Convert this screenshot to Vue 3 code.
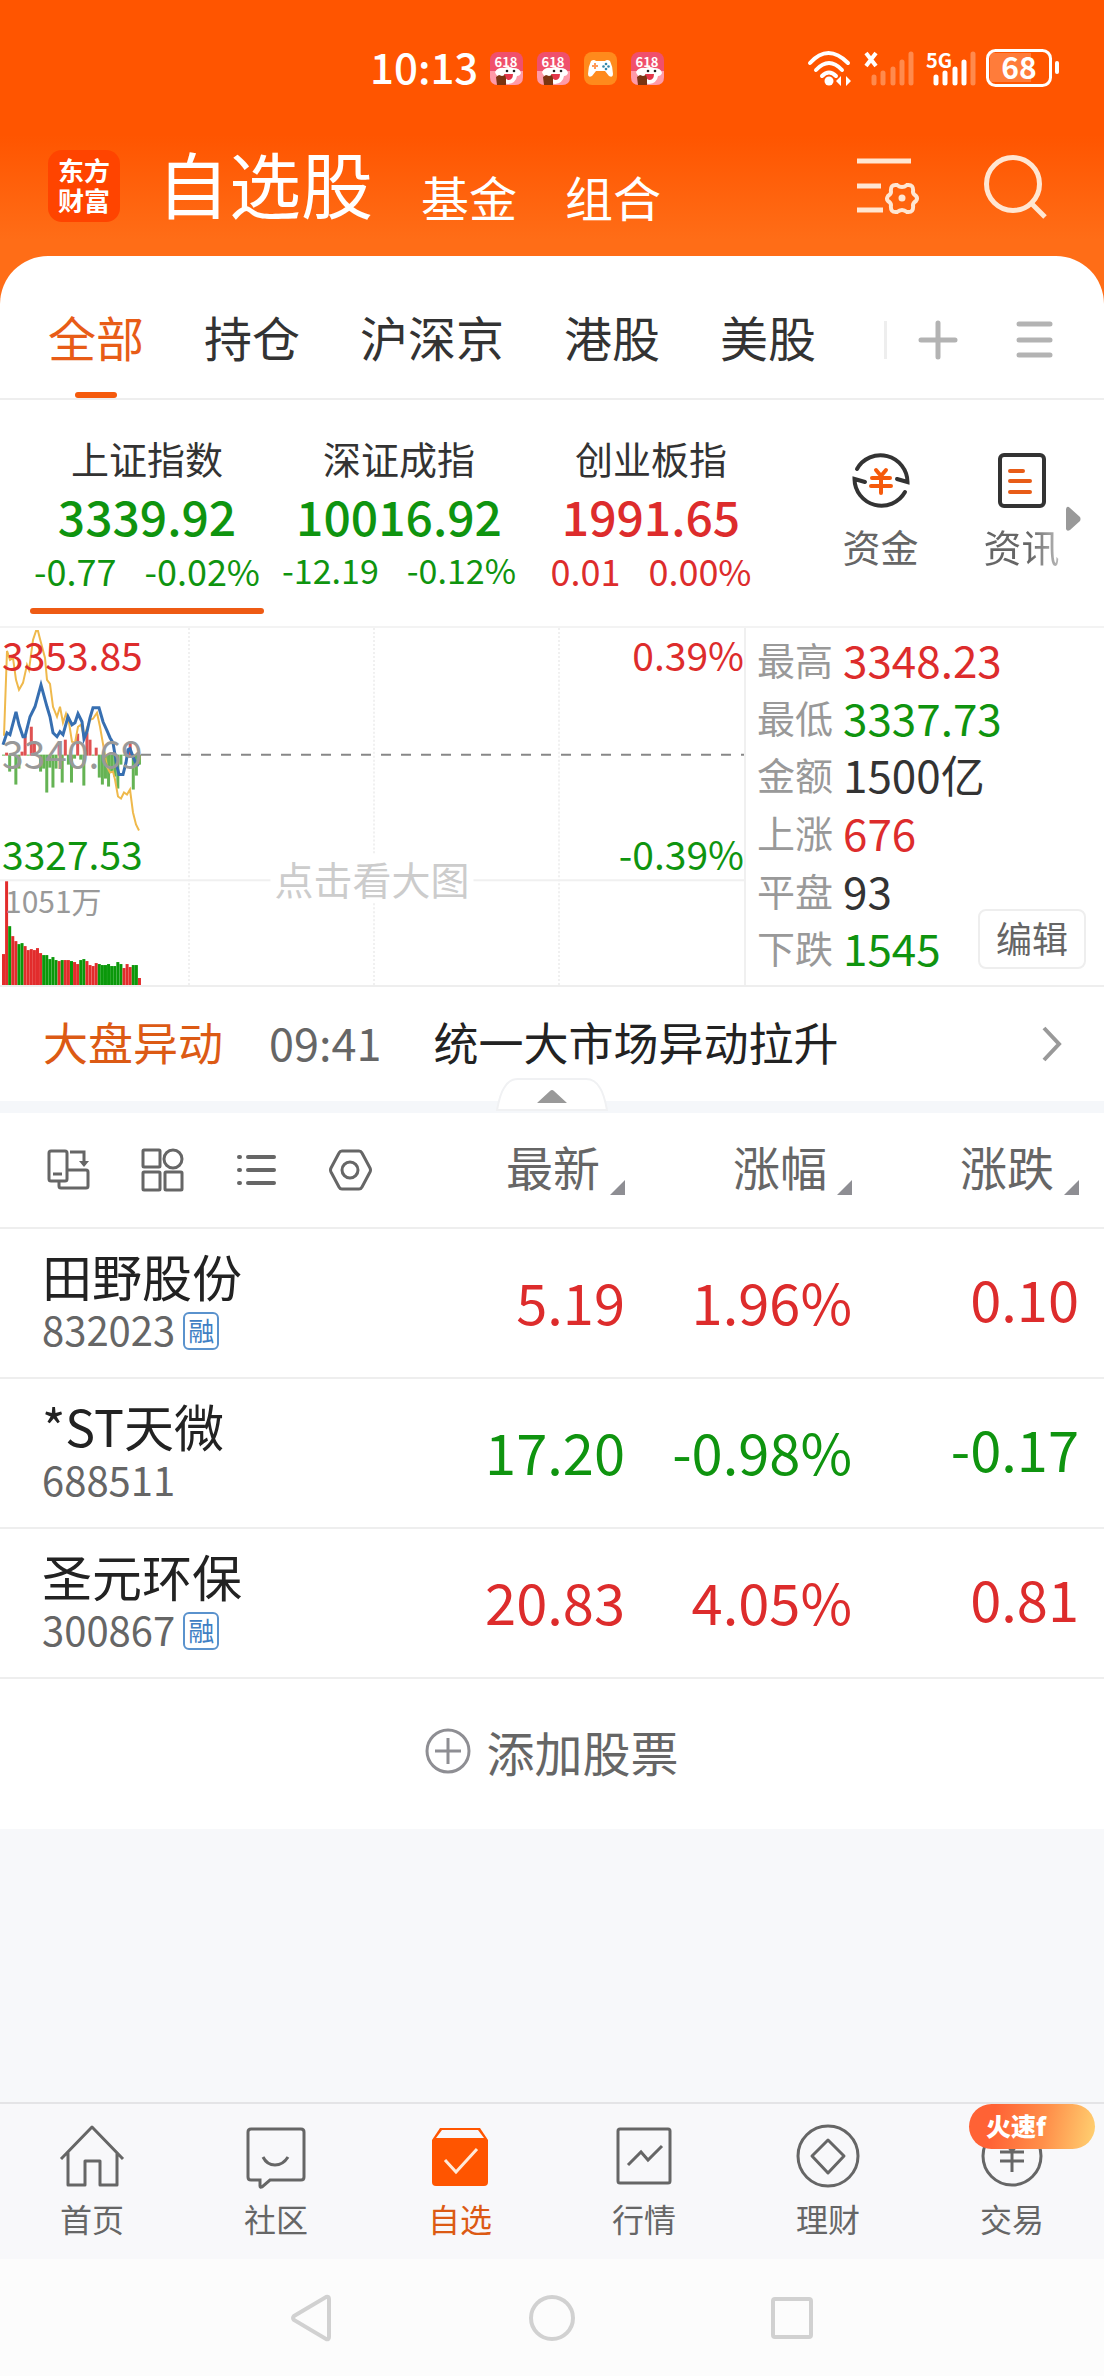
<script setup>
import { ref } from 'vue'

const sections = ['自选股', '基金', '组合']
const groups = ['全部', '持仓', '沪深京', '港股', '美股']
const activeGroup = ref('全部')

const indices = [
  { name: '上证指数', value: '3339.92', diff: '-0.77', pct: '-0.02%', trend: 'down' },
  { name: '深证成指', value: '10016.92', diff: '-12.19', pct: '-0.12%', trend: 'down', compact: true },
  { name: '创业板指', value: '1991.65', diff: '0.01', pct: '0.00%', trend: 'up' }
]
const activeIndex = ref('上证指数')

const facts = [
  { label: '最高', value: '3348.23', tone: 'up' },
  { label: '最低', value: '3337.73', tone: 'down' },
  { label: '金额', value: '1500亿', tone: 'flat' },
  { label: '上涨', value: '676', tone: 'up' },
  { label: '平盘', value: '93', tone: 'flat' },
  { label: '下跌', value: '1545', tone: 'down' }
]

const columns = ['最新', '涨幅', '涨跌']
const stocks = [
  { name: '田野股份', code: '832023', margin: true, last: '5.19', pct: '1.96%', diff: '0.10', trend: 'up' },
  { name: '*ST天微', code: '688511', margin: false, last: '17.20', pct: '-0.98%', diff: '-0.17', trend: 'down' },
  { name: '圣元环保', code: '300867', margin: true, last: '20.83', pct: '4.05%', diff: '0.81', trend: 'up' }
]

// Intraday series, in plot units: one slot per minute
const slot = 3.09
const volumes = [
  [31, 1], [104, 1], [59, 0], [49, 1], [44, 1], [41, 0], [42, 0], [39, 1], [35, 1], [36, 1], [35, 1], [37, 1],
  [32, 1], [30, 0], [30, 0], [26, 0], [28, 0], [25, 0], [24, 1], [25, 0], [25, 1], [25, 1], [24, 0], [23, 1],
  [21, 1], [25, 0], [26, 0], [24, 1], [20, 1], [19, 1], [22, 1], [21, 0], [20, 0], [20, 0], [21, 0], [19, 0],
  [19, 0], [23, 0], [21, 0], [17, 1], [21, 1], [18, 1], [20, 0], [20, 0], [7, 1]
]
const momentum = [
  0, 2, -16, 0, -29, -13, 3, 19, 0, 28, 12, 0, -16, -13, -37, -12, -32, -13, 11, -27, 15, -9, -27, -3, 21,
  -4, -30, 22, 15, 0, 7, -22, -29, -23, -31, -16, -21, -33, -9, 0, 0, 12, -34, -20, -9
]
const price = '3,117 7,105 10,107 16,84 19,97 23,109 25,109 30,89 35,79 41,57 47,79 50,89 53,105 57,109 60,104 63,107 68,89 72,97 75,95 78,86 82,94 84,111 87,104 90,90 93,80 99,80 103,94 107,103 110,110 113,115 117,139 119,147 123,147 126,135 128,122 130,121 133,129 136,136 139,138'
const leading = '4,108 7,23 10,32 13,30 16,52 19,62 23,55 27,37 29,42 33,12 36,3 38,3 40,11 45,30 47,52 50,56 53,79 57,89 60,79 63,95 66,86 69,95 72,114 75,115 78,99 81,97 84,109 90,92 93,91 97,85 100,99 104,122 107,139 110,145 113,144 115,152 118,169 121,171 124,165 127,167 130,162 133,185 136,197 139,203'

const tabs = ['首页', '社区', '自选', '行情', '理财', '交易']
</script>

<template>
  <div class="screen">
    <div class="status">
      <span class="clock">10:13</span>
      <svg v-for="n in [1, 2, 3, 4]" :key="n" width="33" height="33" viewBox="0 0 33 33" aria-hidden="true">
        <template v-if="n === 3">
          <rect width="33" height="33" rx="8" fill="#ff8a1c" />
          <path d="M7 9q3-2 5 0h9q2-2 5 0 3 6 3 13 0 4-4 2l-4-5h-9l-4 5q-4 2-4-2 0-7 3-13z" fill="#fff" />
          <path d="M8 14h6M11 11v6" stroke="#ff9a5a" stroke-width="2" />
          <circle cx="22" cy="12" r="1.3" fill="#38a" /><circle cx="22" cy="17" r="1.3" fill="#38a" />
          <circle cx="19.500" cy="14.500" r="1.300" fill="#38a" /><circle cx="24.500" cy="14.500" r="1.300" fill="#38a" />
        </template>
        <template v-else>
          <rect width="33" height="33" rx="8" fill="#f0506c" />
          <path d="M0 19h33v6q0 8-8 8H8q-8 0-8-8z" fill="#ff9aa8" />
          <text x="16" y="15" class="promo" text-anchor="middle">618</text>
          <path d="M5 20q3-5 9-4 5-2 9 0 7 0 8 5-1 3-4 3-1 7-9 8-8-1-8-7-4-1-5-5z" fill="#fff" />
          <path d="M14 22h9q0 6-5 6-3-1-4-6z" fill="#e4364a" />
          <circle cx="17" cy="19" r="1.300" fill="#222" /><circle cx="24" cy="19" r="1.300" fill="#222" />
          <path d="M6 25l3-2 3 1 3-1 1 3v7H7z" fill="#7a3512" />
        </template>
      </svg>
      <svg class="system" width="256" height="40" viewBox="0 0 256 40" fill="none" aria-label="68%">
        <g stroke="#fff" stroke-width="4" stroke-linecap="round">
          <path d="M4 15q18-20 38 0" /><path d="M10 22q13-14 26 0" /><path d="M16 28q7-7 14 0" />
        </g>
        <circle cx="23" cy="33" r="4.500" fill="#fff" />
        <path d="M30 33l5-5v10zM45 33l-5-5v10z" fill="#fff" />
        <path d="M60 5l10 13M70 5L60 18" stroke="#fff" stroke-width="4" />
        <g stroke="#ff8a4d" stroke-width="5" stroke-linecap="round">
          <path d="M68 29v6M77 25v10M87 21v14M96 14v21M105 6v29M167 6v29" />
        </g>
        <path d="M130 29v6M139 25v10M149 21v14M158 14v21" stroke="#fff" stroke-width="5" stroke-linecap="round" />
        <text x="120" y="20" class="net">5G</text>
        <path d="M184 5h41v29h-41z" fill="#ff7c3a" />
        <rect x="181.500" y="2.500" width="63" height="35" rx="8" stroke="#fff" stroke-width="3" />
        <path d="M251 15v9" stroke="#fff" stroke-width="4" stroke-linecap="round" />
        <text x="213" y="31" class="charge" text-anchor="middle">68</text>
      </svg>
    </div>

    <header class="top">
      <div class="logo"><span>东方</span><span>财富</span></div>
      <nav class="sections">
        <a v-for="(s, i) in sections" :key="s" href="#" :class="{ current: i === 0 }">{{ s }}</a>
      </nav>
      <button class="tool" aria-label="列表设置">
        <svg width="64" height="60" viewBox="0 0 64 60" fill="none" stroke="#ffe6d2" stroke-width="5">
          <path d="M1 5h54M1 30h24M1 54h26" />
          <path d="M41 29q5 4 10 0 7-1 6 7 0 2 3 4 2 2 0 5-3 2-3 4 1 8-6 7-5-4-10 0-7 1-6-7 0-2-3-4-2-2 0-5 3-2 3-4-1-8 6-7z" stroke-width="4" />
          <circle cx="46" cy="42" r="3.500" fill="#ffe6d2" stroke="none" />
        </svg>
      </button>
      <button class="tool search" aria-label="搜索">
        <svg width="64" height="66" viewBox="0 0 64 66" fill="none" stroke="#ffe6d2" stroke-width="5">
          <circle cx="29" cy="31" r="26.500" /><path d="M47 50l14 14" />
        </svg>
      </button>
    </header>

    <main class="sheet">
      <nav class="groups">
        <button v-for="g in groups" :key="g" :class="{ current: g === activeGroup }" @click="activeGroup = g">{{ g }}</button>
        <div class="group-tools">
          <button aria-label="新增分组">
            <svg width="40" height="40" viewBox="0 0 40 40" stroke="#b3b3b3" stroke-width="5" stroke-linecap="round"><path d="M20 3v34M3 20h34" /></svg>
          </button>
          <button aria-label="分组管理">
            <svg width="40" height="40" viewBox="0 0 40 40" stroke="#b3b3b3" stroke-width="5" stroke-linecap="round"><path d="M5 4h31M5 20h31M5 35h31" /></svg>
          </button>
        </div>
      </nav>

      <section class="indices">
        <button v-for="x in indices" :key="x.name" class="index" :class="{ current: x.name === activeIndex }" @click="activeIndex = x.name">
          <span class="index-name">{{ x.name }}</span>
          <strong :class="x.trend">{{ x.value }}</strong>
          <span class="change" :class="[x.trend, { compact: x.compact }]"><span>{{ x.diff }}</span><span>{{ x.pct }}</span></span>
        </button>
        <div class="shortcuts">
          <a href="#">
            <svg width="60" height="60" viewBox="0 0 60 60" fill="none" stroke="#333" stroke-width="4">
              <path d="M6 19A27 27 0 0 1 56.500 32L46 29" stroke-linecap="round" />
              <path d="M54 42A27 27 0 0 1 3.500 29L14 32" stroke-linecap="round" />
              <path d="M25 20l5 6 5-6M21 28h18M20 36h20M30 27v16" stroke="#f55a0c" stroke-linecap="round" />
            </svg>
            <span>资金</span>
          </a>
          <a href="#">
            <svg width="60" height="60" viewBox="0 0 60 60" fill="none" stroke="#333" stroke-width="4">
              <rect x="8" y="5" width="44" height="51" rx="4" />
              <path d="M18 21h13M18 31h20M18 42h20" stroke="#e85c17" stroke-linecap="round" />
            </svg>
            <span class="faded">资讯</span>
          </a>
          <svg class="more" width="16" height="26" viewBox="0 0 16 26"><path d="M1 3q1-4 4-1l10 9q1 2 0 4L5 24q-3 2-4-1z" fill="#999" /></svg>
        </div>
      </section>

      <section class="market">
        <div class="plot">
          <svg viewBox="0 0 744 358" preserveAspectRatio="none" aria-label="分时走势">
            <g stroke="#f0f0f0" stroke-width="2">
              <path d="M189 0v358M374 0v358M559 0v358" stroke-dasharray="2 2" />
              <path d="M0 253h744" />
            </g>
            <path d="M141 127h603" stroke="#888" stroke-width="2" stroke-dasharray="10 10" />
            <rect v-for="(m, i) in momentum" :key="'m' + i" :x="2 + i * slot" :y="m > 0 ? 127 - m : 127" width="3" :height="Math.abs(m) + 1" :fill="m > 0 ? '#df5252' : '#65b354'" />
            <rect v-for="(v, i) in volumes" :key="'v' + i" :x="2 + i * slot" :y="358 - v[0]" width="3" :height="v[0]" :fill="v[1] ? '#e22c2c' : '#0a980a'" />
            <polyline :points="leading" fill="none" stroke="#efb94c" stroke-width="2" />
            <polyline :points="price" fill="none" stroke="#376fb1" stroke-width="3" />
          </svg>
          <span class="tag high up">3353.85</span>
          <span class="tag high right up">0.39%</span>
          <span class="tag base">3340.69</span>
          <span class="tag low down">3327.53</span>
          <span class="tag low right down">-0.39%</span>
          <span class="tag hint">点击看大图</span>
          <span class="tag volume">1051万</span>
        </div>
        <div class="side">
          <dl>
            <div v-for="f in facts" :key="f.label"><dt>{{ f.label }}</dt><dd :class="f.tone">{{ f.value }}</dd></div>
          </dl>
          <button class="edit">编辑</button>
        </div>
      </section>

      <a href="#" class="news">
        <span class="news-kind">大盘异动</span>
        <time>09:41</time>
        <span class="news-title">统一大市场异动拉升</span>
        <svg width="20" height="36" viewBox="0 0 20 36" fill="none" stroke="#999" stroke-width="4"><path d="M2 2l15 16L2 34" /></svg>
      </a>
      <div class="divider">
        <button class="fold" aria-label="收起">
          <svg width="112" height="34" viewBox="0 0 112 34">
            <path d="M1 32Q4 16 8 10 13 1 22 1h68q9 0 14 9 4 6 7 22z" fill="#fff" stroke="#f0f1f3" stroke-width="2" />
            <path d="M41 25l13-12q2-2 4 0l13 12z" fill="#999" />
          </svg>
        </button>
      </div>

      <table class="stocks">
        <colgroup><col><col class="c-last"><col class="c-pct"><col class="c-diff"></colgroup>
        <thead>
          <tr>
            <th>
              <div class="views">
                <button aria-label="横屏">
                  <svg width="44" height="44" viewBox="0 0 44 44" fill="none" stroke="#666" stroke-width="3">
                    <rect x="3" y="3" width="18" height="30" rx="2" /><path d="M7 26h9M24 4h14v13M13 33v5q0 2 2 2h25q2 0 2-2V24q0-2-2-2H21" /><path d="M33 13h10l-5 6z" fill="#666" stroke="none" />
                  </svg>
                </button>
                <button aria-label="宫格">
                  <svg width="44" height="44" viewBox="0 0 44 44" fill="none" stroke="#666" stroke-width="3">
                    <rect x="3" y="2" width="17" height="17" rx="1" /><circle cx="33" cy="11" r="9" /><rect x="3" y="24" width="17" height="18" rx="1" /><rect x="25" y="24" width="17" height="18" rx="1" />
                  </svg>
                </button>
                <button aria-label="列表">
                  <svg width="44" height="44" viewBox="0 0 44 44" fill="none" stroke="#666" stroke-width="4" stroke-linecap="round">
                    <path d="M5 9h1M5 22h1M5 35h1M14 9h26M14 22h26M14 35h26" />
                  </svg>
                </button>
                <button aria-label="设置">
                  <svg width="44" height="44" viewBox="0 0 44 44" fill="none" stroke="#666" stroke-width="3" stroke-linejoin="round">
                    <path d="M14 3h17q2 0 3 2l8 15q1 2 0 4l-8 15q-1 2-3 2H14q-2 0-3-2L3 24q-1-2 0-4l8-15q1-2 3-2z" /><circle cx="22" cy="22" r="8" />
                  </svg>
                </button>
              </div>
            </th>
            <th v-for="c in columns" :key="c">
              <button class="sort">{{ c }}<svg width="15" height="15" viewBox="0 0 15 15"><path d="M15 0v15H0z" fill="#8e8e93" /></svg></button>
            </th>
          </tr>
        </thead>
        <tbody>
          <tr v-for="s in stocks" :key="s.code" :class="s.trend">
            <th scope="row">
              <span class="name">{{ s.name }}</span>
              <span class="code">{{ s.code }}<i v-if="s.margin">融</i></span>
            </th>
            <td>{{ s.last }}</td>
            <td>{{ s.pct }}</td>
            <td>{{ s.diff }}</td>
          </tr>
        </tbody>
      </table>

      <button class="add">
        <svg width="46" height="46" viewBox="0 0 46 46" fill="none" stroke="#8e8e93" stroke-width="3"><circle cx="23" cy="23" r="21" /><path d="M23 10v26M10 23h26" /></svg>
        添加股票
      </button>
    </main>

    <nav class="tabbar">
      <a v-for="t in tabs" :key="t" href="#" :class="{ current: t === '自选' }">
        <svg width="68" height="68" viewBox="0 0 68 68" fill="none" stroke="#666" stroke-width="3">
          <template v-if="t === '首页'">
            <path d="M3 37L34 5l31 32M10 30v33h17V39h15v24h17V30" stroke-linejoin="round" />
          </template>
          <template v-else-if="t === '社区'">
            <path d="M9 7h50q3 0 3 3v45q0 3-3 3H28l-8 7q-2 1-2-1v-6H9q-3 0-3-3V10q0-3 3-3z" />
            <path d="M21 35q4 8 12 8t13-8" stroke-width="3" />
          </template>
          <template v-else-if="t === '自选'">
            <path d="M6 18L14 6h40l8 12v42q0 4-4 4H10q-4 0-4-4z" fill="#f50" stroke="none" />
            <path d="M16 8h36l6 8H10z" fill="#f8f8fa" stroke="none" />
            <path d="M19 38l11 12 21-23" stroke="#ffe9d8" />
          </template>
          <template v-else-if="t === '行情'">
            <rect x="8" y="7" width="52" height="54" rx="2" /><path d="M18 43l13-13 7 8 14-14" />
          </template>
          <template v-else-if="t === '理财'">
            <circle cx="34" cy="34" r="30" /><path d="M34 18l16 16-16 17-16-17z" stroke-linejoin="round" />
          </template>
          <template v-else>
            <circle cx="34" cy="34" r="29" /><path d="M27 21l7 8 7-8M22 30h24M22 39h24M34 29v21" />
          </template>
        </svg>
        <span>{{ t }}</span>
        <em v-if="t === '交易'">火速f</em>
      </a>
    </nav>

    <footer class="system-keys">
      <button aria-label="返回"><svg width="48" height="52" viewBox="0 0 48 52"><path d="M6 24L38 5q3-1 3 2v38q0 3-3 2L6 28q-2-2 0-4z" /></svg></button>
      <button aria-label="主屏幕"><svg width="48" height="52" viewBox="0 0 48 52"><circle cx="24" cy="26" r="21" /></svg></button>
      <button aria-label="最近任务"><svg width="48" height="52" viewBox="0 0 48 52"><rect x="5" y="7" width="38" height="38" rx="2" /></svg></button>
    </footer>
  </div>
</template>

<style>
body { margin: 0; }
</style>

<style scoped>
.screen {
  display: flex;
  flex-direction: column;
  min-height: 100vh;
  font-family: "Noto Sans CJK SC", sans-serif;
  color: #333;
  background: linear-gradient(#f50 0, #f50 135px, #ff6d17 240px, #ff6d17 320px, #f7f8fa 320px);
}
button {
  padding: 0;
  border: 0;
  background: none;
  font: inherit;
  color: inherit;
}
a { color: inherit; text-decoration: none; }
svg { display: block; flex: none; }
.up { color: #dd2c2c; }
.down { color: #0f940f; }
.flat { color: #333; }

.status {
  display: flex;
  align-items: center;
  gap: 14px;
  height: 136px;
  padding: 0 42px 0 370px;
  color: #fff;
}
.clock { font-size: 42px; line-height: 60px; font-weight: 500; margin-right: -2px; padding-bottom: 4px; }
.system { margin-left: auto; overflow: visible; }
.promo { font: 700 13px "Noto Sans CJK SC", sans-serif; fill: #fff; }
.net { font: 700 20px "Noto Sans CJK SC", sans-serif; fill: #fff; }
.charge { font: 700 30px "Noto Sans CJK SC", sans-serif; fill: #fff; }

.top {
  display: flex;
  align-items: center;
  height: 100px;
  padding: 0 56px 20px 48px;
  color: #fff;
}
.logo {
  display: flex;
  flex-direction: column;
  justify-content: center;
  box-sizing: border-box;
  width: 72px;
  height: 72px;
  padding-bottom: 2px;
  border-radius: 14px;
  background: #f40;
  font-size: 26px;
  line-height: 30px;
  font-weight: 700;
  text-align: center;
}
.sections {
  display: flex;
  align-items: flex-end;
  gap: 48px;
  flex: 1;
  margin-left: 37px;
  padding-bottom: 8px;
  font-size: 48px;
  line-height: 72px;
}
.sections .current { font-size: 72px; line-height: 100px; }
.search { margin-left: 64px; }

.sheet { background: #fff; border-radius: 48px 48px 0 0; }

.groups {
  display: flex;
  align-items: center;
  gap: 60px;
  height: 144px;
  padding: 26px 50px 0 48px;
  border-bottom: 2px solid #eee;
  box-sizing: border-box;
  font-size: 48px;
}
.groups > button { position: relative; height: 116px; padding-bottom: 8px; box-sizing: border-box; }
.groups > .current { color: #e85c17; }
.groups > .current::after {
  content: "";
  position: absolute;
  bottom: 0;
  left: 50%;
  width: 42px;
  height: 6px;
  margin-left: -21px;
  border-radius: 3px;
  background: #f55a0c;
}
.group-tools {
  display: flex;
  align-items: center;
  gap: 56px;
  height: 38px;
  margin: 0 0 0 auto;
  padding-left: 31px;
  border-left: 3px solid #eee;
}

.indices {
  display: flex;
  height: 228px;
  padding: 0 12px 0 21px;
  border-bottom: 2px solid #f3f3f3;
  box-sizing: border-box;
}
.index {
  position: relative;
  display: flex;
  flex: 1;
  flex-direction: column;
  align-items: center;
  padding-top: 32px;
}
.index-name { font-size: 38px; line-height: 52px; }
.index strong { font-size: 48px; line-height: 62px; font-weight: 500; }
.change { display: flex; gap: 28px; font-size: 36px; line-height: 48px; white-space: nowrap; }
.change.compact { font-size: 34px; }
.index.current::after {
  content: "";
  position: absolute;
  left: 9px;
  right: 9px;
  bottom: 12px;
  height: 6px;
  border-radius: 3px;
  background: #ee5b14;
}
.shortcuts { position: relative; display: flex; width: 282px; margin-left: 33px; }
.shortcuts a {
  display: flex;
  flex: 1;
  flex-direction: column;
  align-items: center;
  padding-top: 50px;
  font-size: 38px;
  line-height: 72px;
  color: #666;
}
.faded { background: linear-gradient(90deg, #666 60%, #bbb); background-clip: text; color: transparent; }
.more { position: absolute; right: 11px; top: 106px; }

.market { display: grid; grid-template-columns: 746fr 358fr; height: 359px; border-bottom: 2px solid #eee; box-sizing: border-box; }
.plot { position: relative; border-right: 2px solid #f0f0f0; }
.plot svg { width: 100%; height: 357px; }
.tag { position: absolute; left: 2px; font-size: 39px; line-height: 48px; }
.tag.right { left: auto; right: 0; }
.high { top: 2px; }
.base { top: 100px; color: #999; }
.low { top: 201px; }
.tag.hint { left: 50%; top: 226px; padding: 0 4px; transform: translateX(-50%); background: #fff; color: #ccc; white-space: nowrap; }
.tag.volume { left: 5px; top: 248px; font-size: 30px; color: #999; }
.side { position: relative; padding-left: 11px; }
dl { display: flex; flex-direction: column; height: 100%; margin: 0; padding: 2px 0 9px; box-sizing: border-box; }
dl div { display: flex; align-items: center; flex: 1; gap: 10px; }
dt { font-size: 38px; line-height: 56px; color: #999; }
dd { margin: 0; font-size: 44px; line-height: 56px; }
.edit {
  position: absolute;
  right: 18px;
  bottom: 16px;
  width: 108px;
  height: 60px;
  padding-bottom: 4px;
  border: 2px solid #eee;
  border-radius: 8px;
  background: #fff;
  color: #666;
  font-size: 36px;
  line-height: 48px;
}

.news { display: flex; align-items: center; height: 114px; padding: 0 42px 0 43px; font-size: 45px; line-height: 108px; }
.news span, .news time { padding-bottom: 4px; }
.news-kind { color: #dc5a14; }
.news time { margin: 0 52px 0 46px; color: #666; }
.news-title { flex: 1; color: #222; }
.divider { position: relative; height: 12px; background: #f5f7fa; }
.fold { position: absolute; left: 50%; bottom: 1px; margin-left: -56px; }

.stocks { width: 100%; border-collapse: collapse; table-layout: fixed; }
.c-last, .c-pct { width: 227px; }
.c-diff { width: 252px; }
.stocks tr { border-bottom: 2px solid #eee; }
.stocks th, .stocks td { padding: 0; font-weight: 400; }
.stocks thead tr { height: 115px; }
.stocks thead th { text-align: right; }
.views { display: flex; gap: 50px; padding-left: 46px; }
.sort { display: inline-flex; align-items: flex-end; gap: 10px; padding-bottom: 8px; font-size: 47px; line-height: 60px; color: #666; }
.sort svg { margin-bottom: 1px; }
.stocks tbody tr { height: 150px; }
.stocks tbody th { padding: 0 0 6px 42px; text-align: left; }
.name { display: block; font-size: 50px; line-height: 58px; color: #222; white-space: nowrap; }
.code { display: flex; align-items: center; font-size: 40px; line-height: 50px; color: #666; }
.code i {
  width: 32px;
  height: 34px;
  margin: 4px 0 0 8px;
  border: 2px solid #5a92cd;
  border-radius: 6px;
  color: #3f80c4;
  font-size: 26px;
  line-height: 32px;
  font-style: normal;
  text-align: center;
}
.stocks td { padding-bottom: 4px; font-size: 56px; line-height: 72px; text-align: right; }
.stocks td:last-child { padding-bottom: 10px; }
.stocks tr > :last-child { padding-right: 25px; }

.add {
  display: flex;
  align-items: center;
  justify-content: center;
  gap: 15px;
  width: 100%;
  height: 150px;
  padding-bottom: 6px;
  color: #666;
  font-size: 48px;
  line-height: 72px;
}

.tabbar {
  display: flex;
  height: 155px;
  margin-top: auto;
  border-top: 2px solid #e4e4e6;
  background: #f8f8fa;
}
.tabbar a {
  position: relative;
  display: flex;
  flex: 1;
  flex-direction: column;
  align-items: center;
  padding-top: 18px;
  color: #666;
  font-size: 32px;
  line-height: 56px;
}
.tabbar .current { color: #dc5a14; }
.tabbar em {
  position: absolute;
  top: 0;
  right: 9px;
  width: 109px;
  height: 45px;
  padding-left: 17px;
  border-radius: 23px;
  background: linear-gradient(100deg, #ff6235 20%, #ff8f4a 60%, #ffd272);
  color: #fff;
  font-size: 25px;
  line-height: 42px;
  font-style: normal;
  font-weight: 900;
}

.system-keys {
  display: flex;
  align-items: center;
  justify-content: center;
  gap: 192px;
  height: 117px;
  background: #fcfcfc;
}
.system-keys svg { fill: none; stroke: #d1d1d1; stroke-width: 4; }
</style>
